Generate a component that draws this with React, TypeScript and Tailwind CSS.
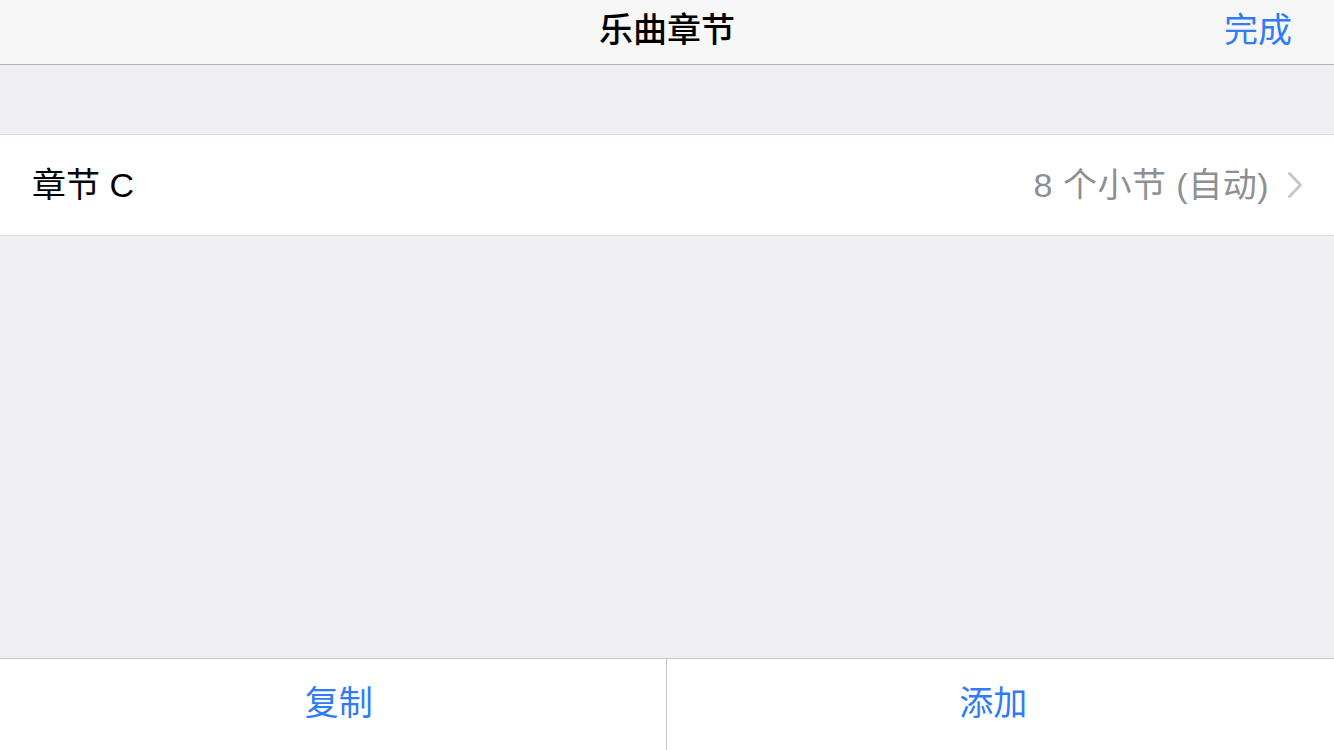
const font = { fontFamily: '"Liberation Sans", "Noto Sans CJK SC", sans-serif' };

const Chevron = () => (
  <svg width="17" height="28" viewBox="0 0 17 28" fill="none" className="shrink-0">
    <path d="M2.5 2.5L13.5 14L2.5 25.5" stroke="#c7c7cc" strokeWidth="3" strokeLinecap="round" strokeLinejoin="round" />
  </svg>
);

export default function App() {
  return (
    <div className="flex h-[750px] w-[1334px] flex-col overflow-hidden bg-[#efeff4]" style={font}>
      {/* Nav bar */}
      <div className="grid h-[65px] shrink-0 grid-cols-[1fr_auto_1fr] items-center border-b border-[#b2b2b2] bg-[#f7f7f8] pb-[4px]">
        <div />
        <span className="text-[34px] font-medium leading-none text-black">乐曲章节</span>
        <button className="justify-self-end pr-[42px] text-[34px] leading-none text-[#2f7cf6]">完成</button>
      </div>

      <div className="h-[69px] shrink-0" />

      {/* Section cell */}
      <div className="flex h-[102px] shrink-0 items-center justify-between border-y border-[#dcdce0] bg-white pb-[1px] pl-[32px] pr-[30px]">
        <span className="text-[34px] leading-none text-black">章节 C</span>
        <div className="flex items-center gap-[18px]">
          <span className="text-[34px] leading-none tracking-[0.5px] text-[#8e8e93]">8 个小节 (自动)</span>
          <Chevron />
        </div>
      </div>

      <div className="flex-1" />

      {/* Bottom toolbar */}
      <div className="flex h-[92px] shrink-0 border-t border-[#c8c8cc] bg-white">
        <button className="flex flex-1 items-center justify-center border-r border-[#c8c8cc] pb-[3px] pl-[12px] text-[34px] leading-none text-[#2f7cf6]">
          复制
        </button>
        <button className="flex flex-1 items-center justify-center pb-[3px] pr-[14px] text-[34px] leading-none text-[#2f7cf6]">
          添加
        </button>
      </div>
    </div>
  );
}
